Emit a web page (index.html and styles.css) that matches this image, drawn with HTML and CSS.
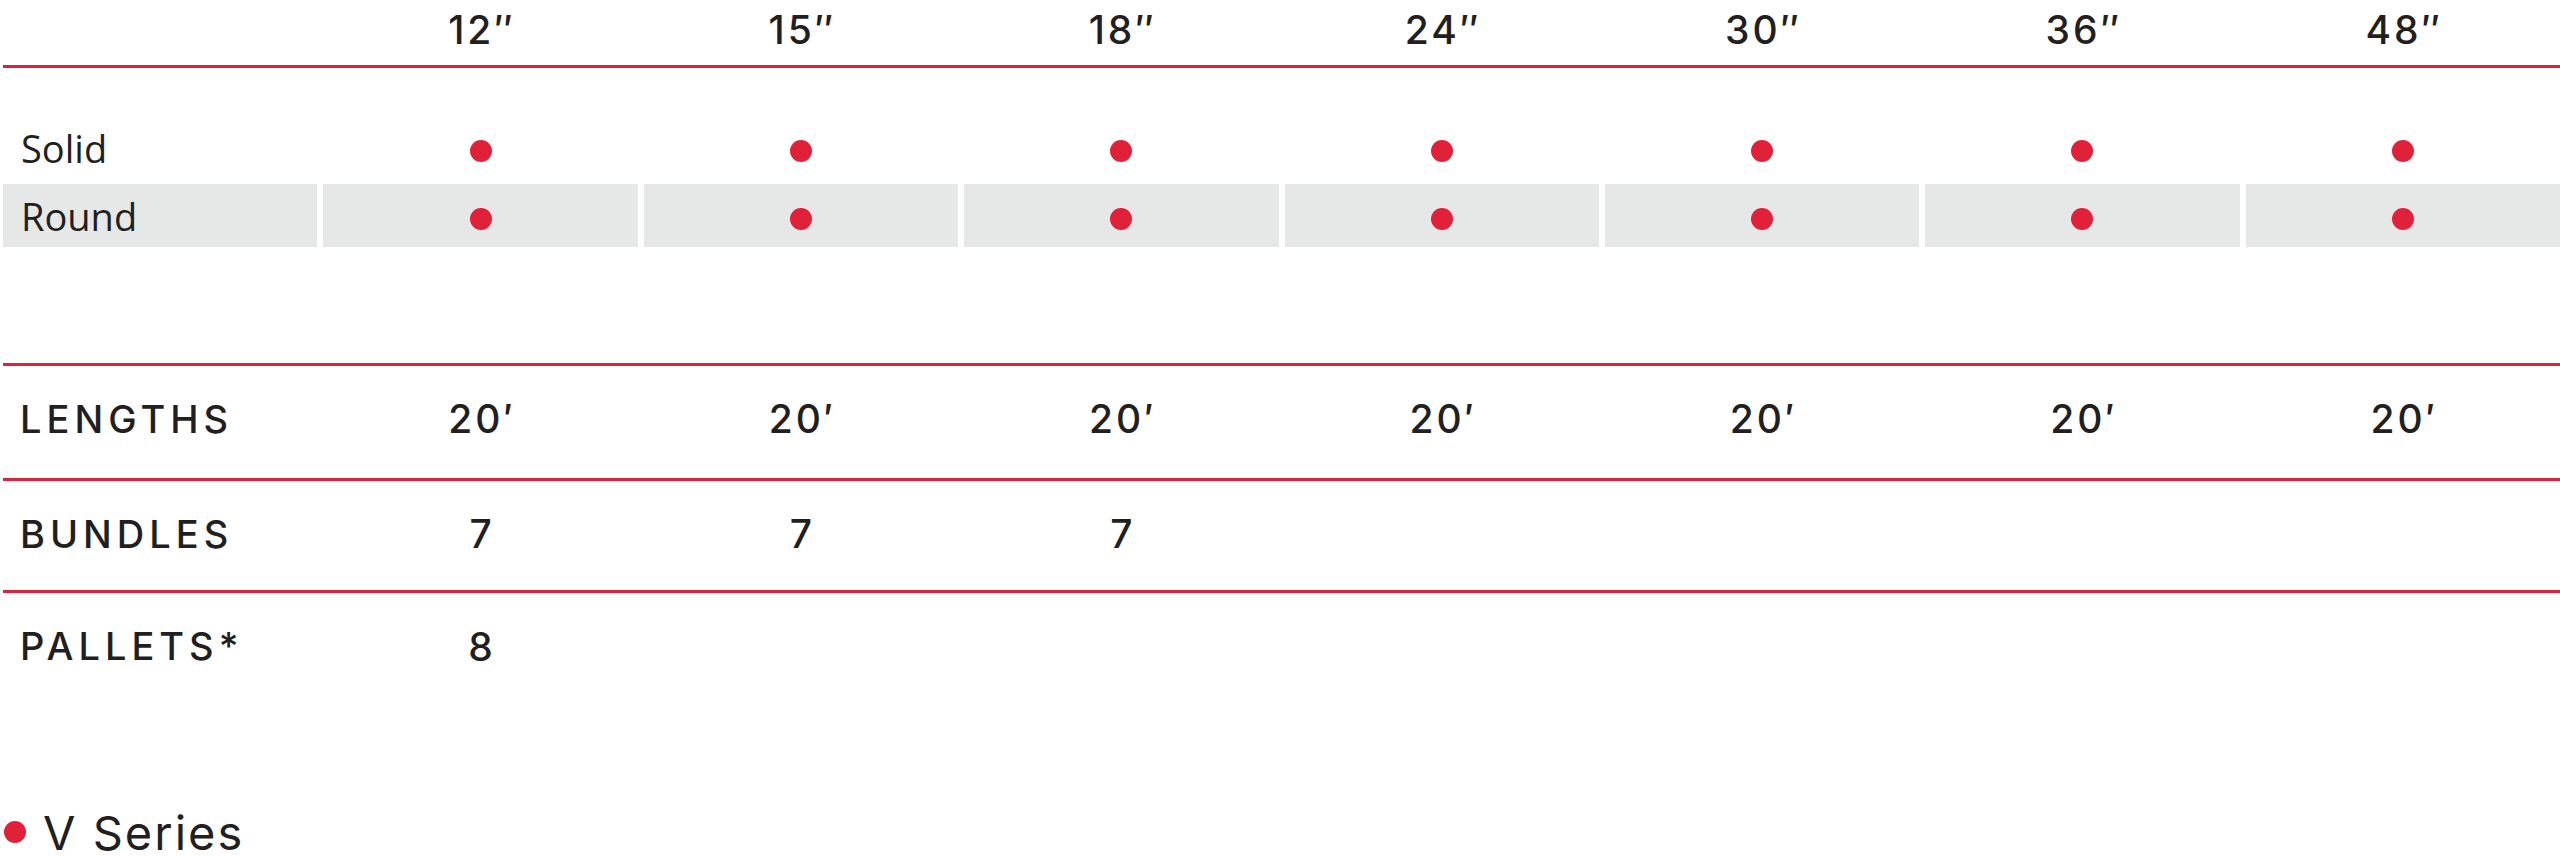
FILE: index.html
```html
<!DOCTYPE html>
<html>
<head>
<meta charset="utf-8">
<link rel="stylesheet" href="styles.css">
</head>
<body>
<div class="sheet">
  <div class="row head">
    <div></div>
    <div class="num">12″</div>
    <div class="num">15″</div>
    <div class="num">18″</div>
    <div class="num">24″</div>
    <div class="num">30″</div>
    <div class="num">36″</div>
    <div class="num">48″</div>
  </div>
  <div class="rule"></div>

  <div class="row spec solid">
    <div class="cell label-cell"><span class="type">Solid</span></div>
    <div class="cell"><span class="dot"></span></div>
    <div class="cell"><span class="dot"></span></div>
    <div class="cell"><span class="dot"></span></div>
    <div class="cell"><span class="dot"></span></div>
    <div class="cell"><span class="dot"></span></div>
    <div class="cell"><span class="dot"></span></div>
    <div class="cell"><span class="dot"></span></div>
  </div>
  <div class="row spec round">
    <div class="cell label-cell"><span class="type">Round</span></div>
    <div class="cell"><span class="dot"></span></div>
    <div class="cell"><span class="dot"></span></div>
    <div class="cell"><span class="dot"></span></div>
    <div class="cell"><span class="dot"></span></div>
    <div class="cell"><span class="dot"></span></div>
    <div class="cell"><span class="dot"></span></div>
    <div class="cell"><span class="dot"></span></div>
  </div>

  <div class="rule rule-gap"></div>
  <div class="row info lengths">
    <div class="label">LENGTHS</div>
    <div class="num">20′</div>
    <div class="num">20′</div>
    <div class="num">20′</div>
    <div class="num">20′</div>
    <div class="num">20′</div>
    <div class="num">20′</div>
    <div class="num">20′</div>
  </div>
  <div class="rule"></div>
  <div class="row info bundles">
    <div class="label">BUNDLES</div>
    <div class="num">7</div>
    <div class="num">7</div>
    <div class="num">7</div>
    <div></div><div></div><div></div><div></div>
  </div>
  <div class="rule"></div>
  <div class="row info pallets">
    <div class="label">PALLETS*</div>
    <div class="num">8</div>
    <div></div><div></div><div></div><div></div><div></div><div></div>
  </div>

  <div class="legend">
    <span class="dot legend-dot"></span>
    <span class="legend-text">V Series</span>
  </div>
</div>
</body>
</html>
```

FILE: styles.css
```css
html, body {
  margin: 0;
  padding: 0;
  background: #ffffff;
  overflow: hidden;
}

body {
  color: #231f20;
  font-family: "Inter", "Liberation Sans", sans-serif;
}

.sheet {
  margin-left: 3px;
  width: 2557px;
}

.row {
  display: grid;
  grid-template-columns: repeat(8, 1fr);
  column-gap: 6px;
  align-items: center;
  box-sizing: border-box;
}

.head {
  height: 65px;
  padding-bottom: 7px;
}

.num {
  text-align: center;
  font-size: 39px;
  line-height: 39px;
  font-weight: 500;
  letter-spacing: 3px;
  padding-left: 3px;
}

.label {
  padding-left: 17px;
  font-size: 38px;
  line-height: 38px;
  font-weight: 500;
  letter-spacing: 5px;
}

.rule {
  height: 3px;
  background: #e1213a;
}

.spec {
  height: 63px;
  align-items: stretch;
}

.solid {
  margin-top: 52px;
  height: 64px;
}

.cell {
  display: flex;
  align-items: center;
  justify-content: center;
}

.round .cell {
  background: #e6e7e7;
}

.label-cell {
  justify-content: flex-start;
  padding-left: 18px;
}

.type {
  font-family: "Open Sans", "Liberation Sans", sans-serif;
  font-size: 38px;
  line-height: 38px;
  font-weight: 400;
  margin-bottom: 8px;
}

.round .type {
  margin-bottom: 0;
}

.dot {
  display: block;
  width: 22px;
  height: 22px;
  border-radius: 50%;
  background: #e1213a;
}

.solid .dot {
  margin-bottom: 2px;
}

.round .dot {
  margin-top: 6px;
}

.rule-gap {
  margin-top: 116px;
}

.lengths {
  height: 112px;
  padding-bottom: 7px;
}

.bundles {
  height: 109px;
  padding-bottom: 4px;
}

.pallets {
  height: 106px;
}

.legend {
  margin-top: 108px;
  height: 50px;
  display: flex;
  align-items: center;
  gap: 17px;
  padding-left: 1px;
}

.legend-text {
  font-size: 47px;
  line-height: 47px;
  font-weight: 400;
  letter-spacing: 2px;
}
```
